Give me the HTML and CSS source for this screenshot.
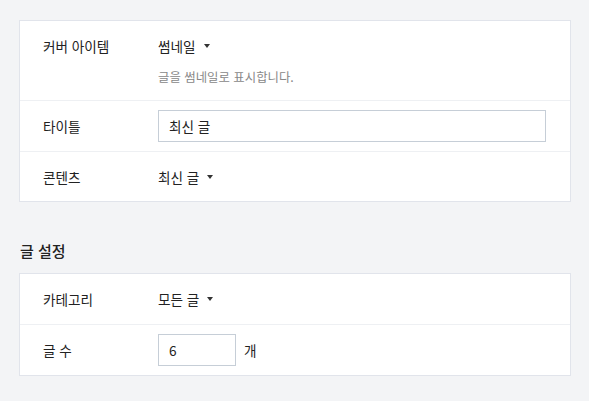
FILE: index.html
```html
<!DOCTYPE html>
<html lang="ko">
<head>
<meta charset="utf-8">
<link rel="stylesheet" href="styles.css">
</head>
<body>
<div class="page">
  <div class="card">
    <div class="row row-tall">
      <div class="label">커버 아이템</div>
      <div class="value">
        <div class="select">썸네일<span class="caret"></span></div>
        <div class="desc">글을 썸네일로 표시합니다.</div>
      </div>
    </div>
    <div class="row row-input">
      <div class="label">타이틀</div>
      <div class="value"><div class="input input-wide">최신 글</div></div>
    </div>
    <div class="row">
      <div class="label">콘텐츠</div>
      <div class="value"><div class="select">최신 글<span class="caret"></span></div></div>
    </div>
  </div>

  <h2 class="section-title">글 설정</h2>

  <div class="card">
    <div class="row">
      <div class="label">카테고리</div>
      <div class="value"><div class="select">모든 글<span class="caret"></span></div></div>
    </div>
    <div class="row row-input">
      <div class="label">글 수</div>
      <div class="value inline"><div class="input input-num">6</div><span class="unit">개</span></div>
    </div>
  </div>
</div>
</body>
</html>
```

FILE: styles.css
```css
* { box-sizing: border-box; }
html, body {
  margin: 0;
  padding: 0;
  background: #f3f4f6;
}
body {
  font-family: "Noto Sans CJK KR", "Noto Sans", sans-serif;
  font-size: 13.6px;
  color: #222;
}
.page {
  padding: 20px 18px 0 19px;
  width: 589px;
}
.card {
  background: #fff;
  border: 1px solid #e1e4eb;
  width: 552px;
}
.row {
  display: flex;
  align-items: center;
  height: 50px;
  padding-left: 23px;
  border-top: 1px solid #eef0f3;
}
.row:first-child { border-top: none; }
.row-tall {
  height: 79px;
  align-items: flex-start;
  padding-top: 15px;
}
.row-input { height: 51px; }
.label {
  width: 115px;
  flex: none;
  line-height: 20px;
}
.value { flex: 1; }
.value.inline {
  display: flex;
  align-items: center;
}
.select {
  display: inline-flex;
  align-items: center;
  line-height: 20px;
}
.caret {
  display: inline-block;
  width: 0;
  height: 0;
  margin-left: 8px;
  border-left: 3.5px solid transparent;
  border-right: 3.5px solid transparent;
  border-top: 4px solid #333;
}
.desc {
  margin-top: 12px;
  font-size: 12.4px;
  color: #888;
  line-height: 18px;
}
.input {
  height: 32px;
  border: 1px solid #c6ced7;
  padding: 0 10px;
  line-height: 30px;
  background: #fff;
}
.input-wide { width: 388px; }
.input-num { width: 78px; }
.unit { margin-left: 8px; }
.section-title {
  margin: 38px 0 11px 1px;
  font-size: 15px;
  font-weight: 500;
  line-height: 22px;
  color: #222;
}
```
